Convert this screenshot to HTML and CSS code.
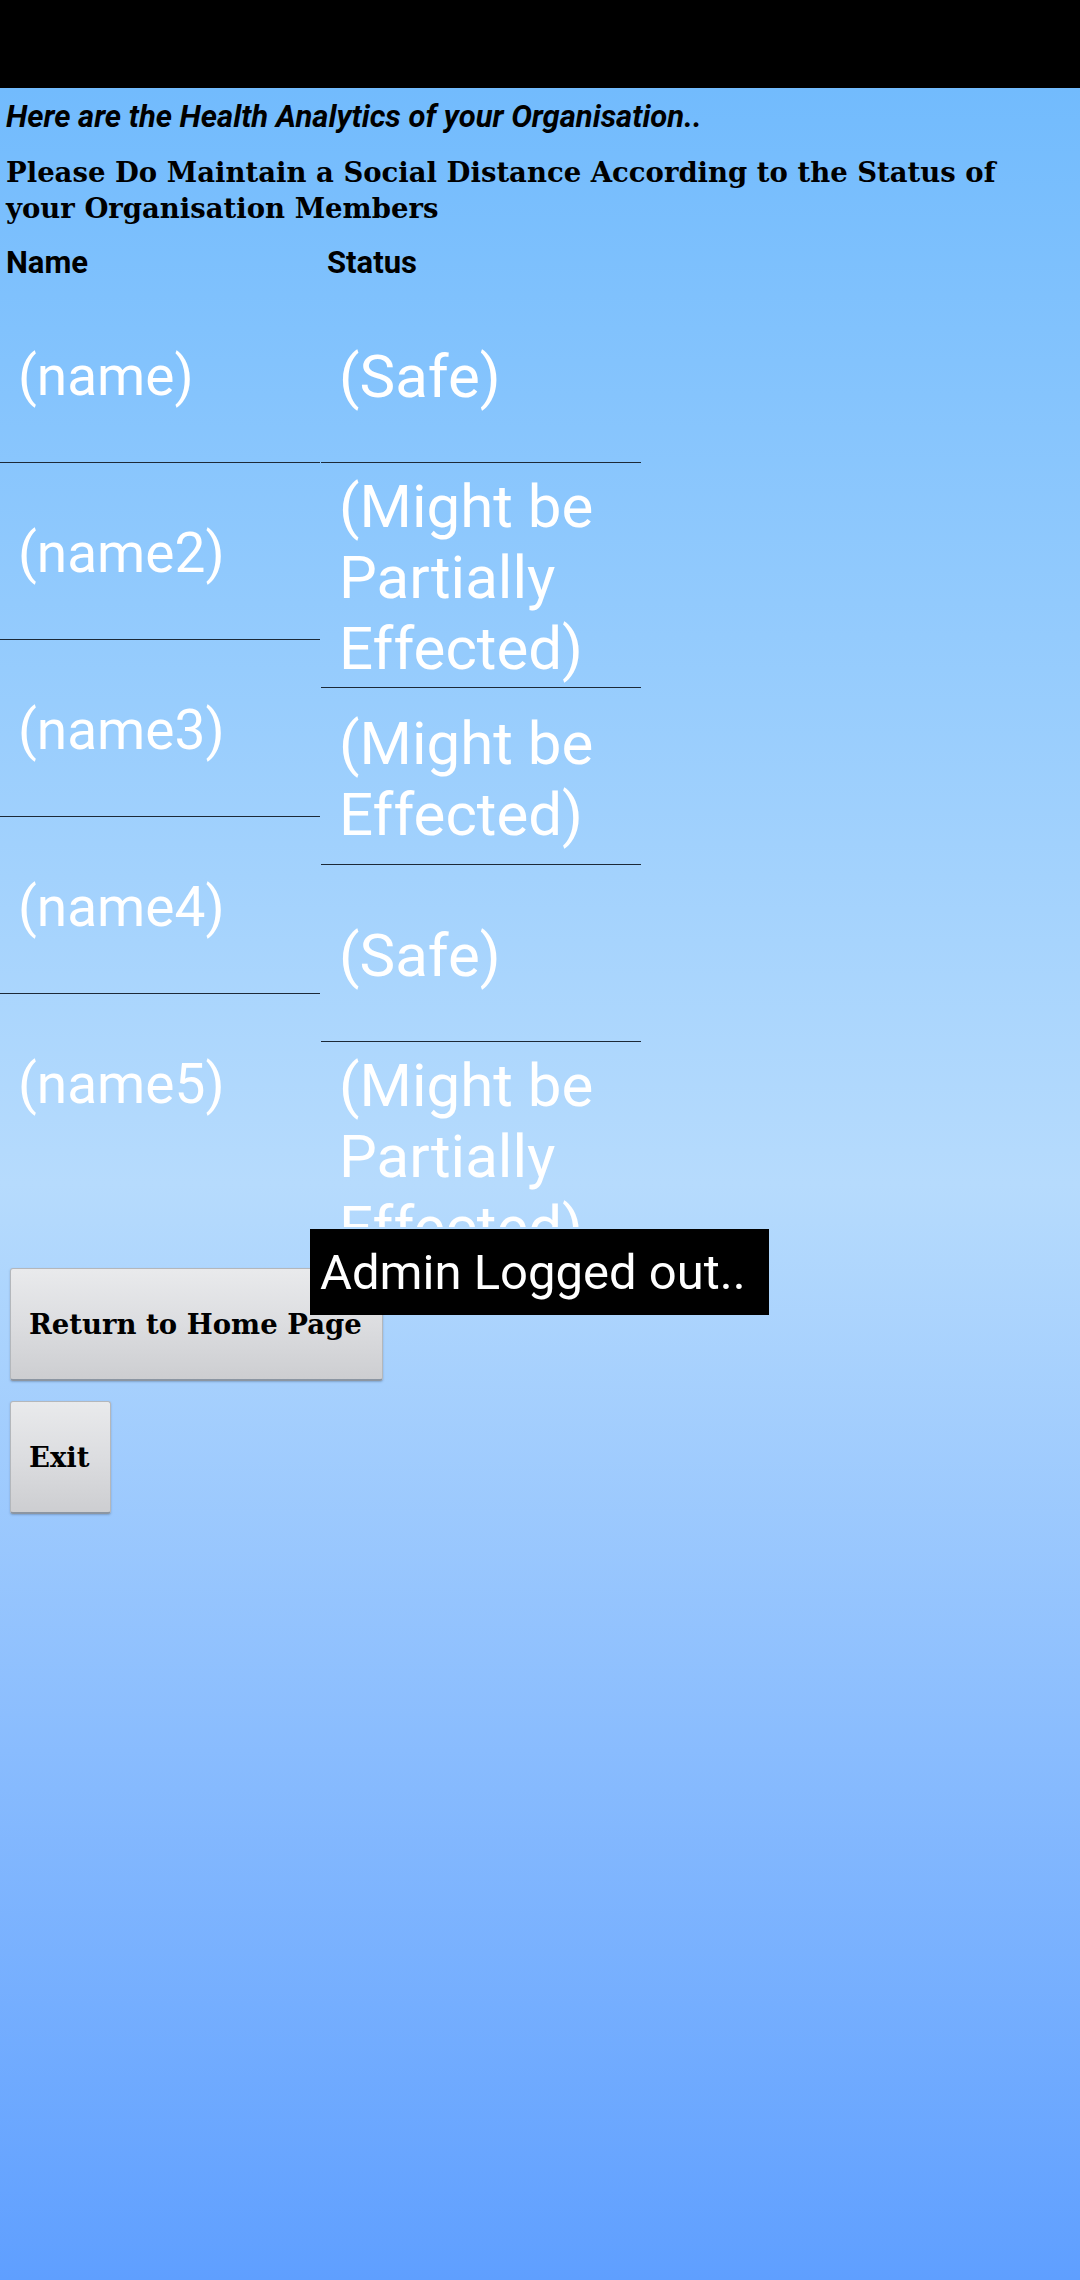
FILE: index.html
```html
<!DOCTYPE html>
<html lang="en">
<head>
<meta charset="utf-8">
<title>Health Analytics</title>
<link rel="stylesheet" href="styles.css">
</head>
<body>
<div class="statusbar"></div>
<main class="screen">
  <p class="intro">Here are the Health Analytics of your Organisation..</p>
  <p class="notice">Please Do Maintain a Social Distance According to the Status of your Organisation Members</p>
  <div class="header">
    <span class="hcell">Name</span>
    <span class="hcell">Status</span>
  </div>
  <div class="table">
    <ul class="col names">
      <li class="row">(name)</li>
      <li class="row">(name2)</li>
      <li class="row">(name3)</li>
      <li class="row">(name4)</li>
      <li class="row">(name5)</li>
    </ul>
    <ul class="col statuses">
      <li class="row">(Safe)</li>
      <li class="row">(Might be Partially Effected)</li>
      <li class="row">(Might be Effected)</li>
      <li class="row">(Safe)</li>
      <li class="row">(Might be Partially Effected)</li>
    </ul>
  </div>
  <div class="actions">
    <button class="btn">Return to Home Page</button>
    <button class="btn">Exit</button>
  </div>
</main>
<div class="toast">Admin Logged out..</div>
</body>
</html>
```
FILE: styles.css
```css
html, body {
  margin: 0;
  padding: 0;
}
body {
  width: 1080px;
  min-height: 2280px;
  background: #000;
  font-family: Roboto, "Noto Sans", sans-serif;
  position: relative;
}
.statusbar {
  height: 88px;
  background: #000;
}
.screen {
  min-height: 2192px;
  box-sizing: border-box;
  overflow: hidden;
  background: linear-gradient(180deg, #72bbfd 0%, #b6dbfd 50%, #5f9fff 100%);
}
.intro {
  margin: 11px 0 0 6px;
  font-family: Roboto, sans-serif;
  font-style: italic;
  font-weight: 700;
  font-size: 31px;
  line-height: 36px;
  color: #000;
}
.notice {
  margin: 19px 34px 0 6px;
  font-family: "DejaVu Serif", "Liberation Serif", serif;
  font-weight: 700;
  font-size: 27.5px;
  line-height: 36px;
  color: #000;
}
.header {
  display: flex;
  gap: 1px;
  margin-top: 19px;
  height: 36px;
}
.hcell {
  width: 320px;
  box-sizing: border-box;
  padding-left: 6px;
  font-family: Roboto, sans-serif;
  font-weight: 700;
  font-size: 31px;
  line-height: 36px;
  color: #000;
}
.table {
  display: flex;
  align-items: flex-start;
  gap: 1px;
  margin-top: 5px;
  height: 941px;
  overflow: hidden;
}
.col {
  list-style: none;
  margin: 0;
  padding: 0;
  width: 320px;
}
.row {
  display: flex;
  align-items: center;
  box-sizing: content-box;
  min-height: 165px;
  padding: 8px 8px 3px 18px;
  border-bottom: 1px solid #1c2937;
  font-family: Roboto, sans-serif;
  font-size: 60px;
  line-height: 71px;
  color: #fff;
}
.names .row {
  font-size: 55px;
}
.col .row:last-child {
  border-bottom: none;
}
.actions {
  display: flex;
  flex-direction: column;
  align-items: flex-start;
  gap: 20px;
  margin: 41px 0 0 10px;
}
.btn {
  height: 113px;
  padding: 0 20px 0 18px;
  border: 1px solid #b4b7bb;
  border-bottom: 2px solid #8c96a2;
  border-radius: 3px;
  background: linear-gradient(180deg, #e9eaec 0%, #dcdde0 50%, #cdced1 100%);
  box-shadow: 0 1px 2px rgba(60, 80, 110, 0.35);
  font-family: "DejaVu Serif", "Liberation Serif", serif;
  font-weight: 700;
  font-size: 27.5px;
  color: #000;
}
.toast {
  position: absolute;
  left: 310px;
  top: 1229px;
  width: 459px;
  height: 86px;
  box-sizing: border-box;
  padding: 2px 0 0 10px;
  background: #000;
  color: #fff;
  font-family: Roboto, sans-serif;
  font-size: 49px;
  line-height: 84px;
  white-space: nowrap;
}
```
